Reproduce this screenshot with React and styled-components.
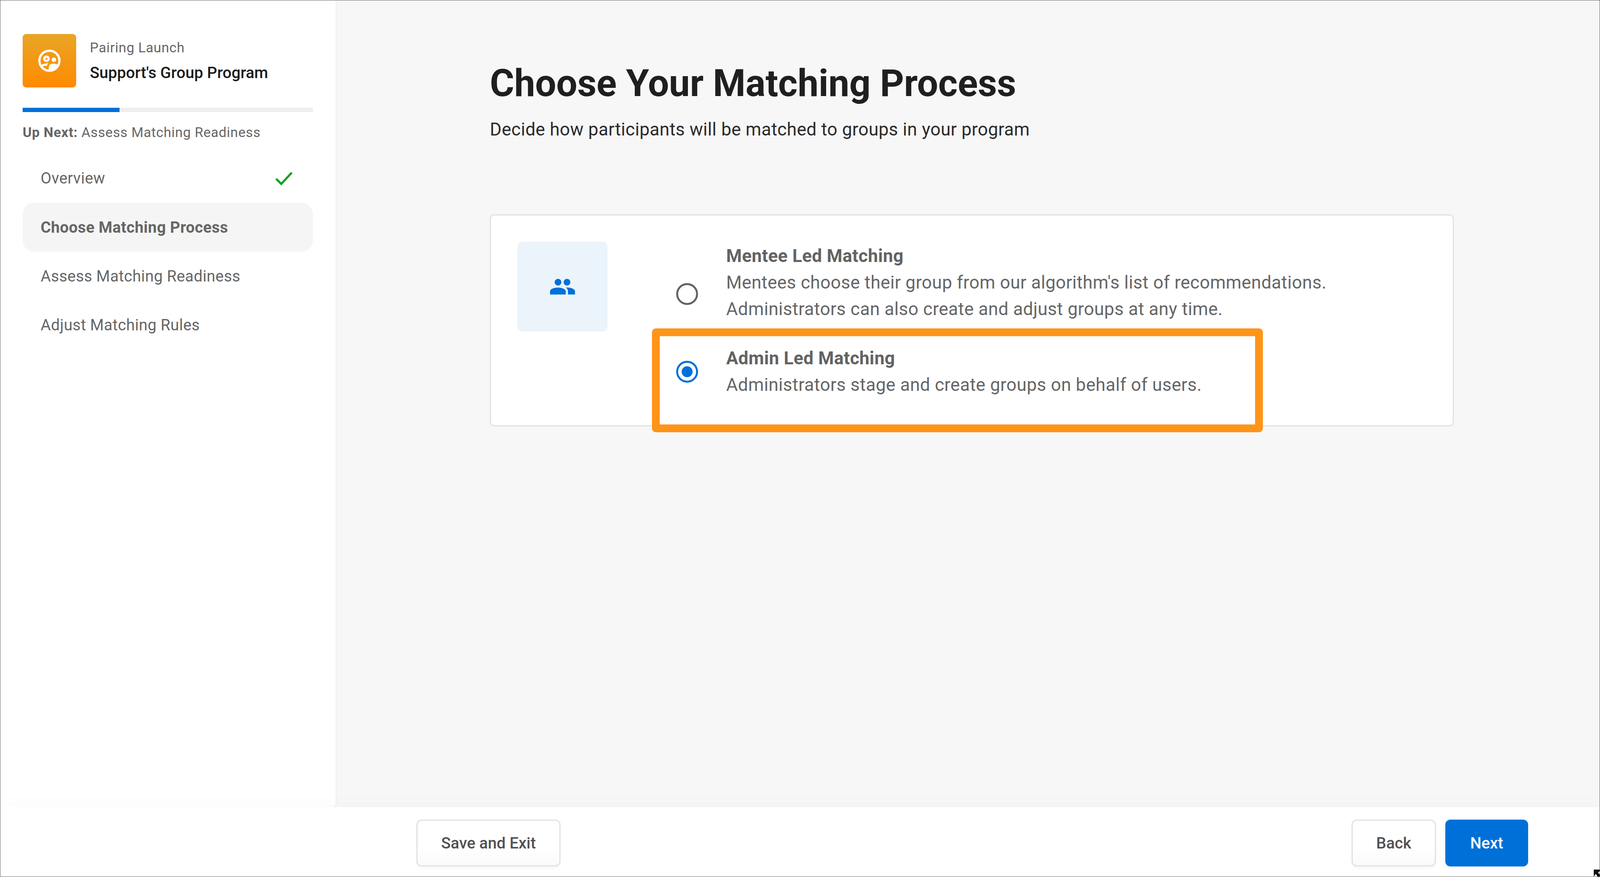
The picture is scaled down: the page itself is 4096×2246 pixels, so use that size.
import React from "react";
import styled, { createGlobalStyle } from "styled-components";

const GlobalStyle = createGlobalStyle`
  html, body {
    margin: 0;
    padding: 0;
    background: #fff;
  }
  *, *::before, *::after {
    box-sizing: border-box;
  }
`;

const Frame = styled.div`
  width: 4096px;
  height: 2246px;
  display: flex;
  flex-direction: column;
  position: relative;
  overflow: hidden;
  border: 1px solid #5c5c5c;
  font-family: Roboto, "Liberation Sans", sans-serif;
  background: #fff;
`;

const Body = styled.div`
  flex: 1;
  display: flex;
  min-height: 0;
  background: #f7f7f7;
`;

const Sidebar = styled.aside`
  width: 858px;
  flex: none;
  background: #fff;
  border-bottom-right-radius: 9px;
  box-shadow: 2px 0 6px rgba(0, 0, 0, 0.04);
  padding: 86px 58px 0 57px;
`;

const ProgramHeader = styled.div`
  display: flex;
  align-items: center;
  gap: 35px;
`;

const ProgramIcon = styled.div`
  width: 137px;
  height: 137px;
  border-radius: 9px;
  background: linear-gradient(180deg, #e9a527 0%, #ff8a00 100%);
  display: flex;
  align-items: center;
  justify-content: center;
`;

const ProgramText = styled.div`
  display: flex;
  flex-direction: column;
  gap: 18px;
`;

const ProgramLabel = styled.div`
  font-size: 35px;
  line-height: 42px;
  letter-spacing: 0.8px;
  color: #666;
`;

const ProgramName = styled.div`
  font-size: 40.5px;
  line-height: 48px;
  font-weight: 500;
  color: #1d1d1d;
`;

const ProgressTrack = styled.div`
  height: 11px;
  margin-top: 52px;
  background: #eee;
`;

const ProgressFill = styled.div`
  height: 100%;
  background: #0070d9;
`;

const UpNext = styled.div`
  margin-top: 30px;
  font-size: 35px;
  line-height: 46px;
  letter-spacing: 0.8px;
  color: #666;

  b {
    font-weight: 700;
  }
`;

const Steps = styled.nav`
  margin-top: 31px;
  display: flex;
  flex-direction: column;
`;

const Step = styled.div`
  height: 125.4px;
  display: flex;
  align-items: center;
  justify-content: space-between;
  padding: 0 51px 0 46px;
  border-radius: 30px;
  font-size: 40px;
  letter-spacing: 0.4px;
  color: #666;
  background: ${(p) => (p.$active ? "#f5f5f5" : "transparent")};
  font-weight: ${(p) => (p.$active ? 700 : 400)};
`;

const Main = styled.main`
  flex: 1;
  padding: 147px 373px 0 395px;
`;

const Title = styled.h1`
  margin: 0;
  font-size: 95.6px;
  line-height: 130px;
  font-weight: 700;
  color: #1f1f1f;
`;

const Subtitle = styled.p`
  margin: 24px 0 0;
  font-size: 45.7px;
  line-height: 60px;
  color: #2b2b2b;
  letter-spacing: 0.42px;
`;

const Card = styled.section`
  margin-top: 187px;
  height: 543px;
  position: relative;
  display: flex;
  gap: 176px;
  padding: 67px 0 0 68px;
  background: #fff;
  border: 3px solid #e2e2e2;
  border-radius: 11px;
`;

const IconTile = styled.div`
  width: 230px;
  height: 230px;
  flex: none;
  border-radius: 12px;
  background: #ebf4fb;
  display: flex;
  align-items: center;
  justify-content: center;
`;

const Options = styled.div`
  margin-top: 3px;
  display: flex;
  flex-direction: column;
`;

const Option = styled.label`
  display: flex;
  align-items: center;
  gap: 72px;
  position: relative;
  height: ${(p) => p.$height}px;

  ${(p) =>
    p.$highlighted &&
    `
    &::after {
      content: "";
      position: absolute;
      left: -62px;
      top: -43px;
      width: 1564px;
      height: 266px;
      border: 20px solid #ff9419;
      border-radius: 10px;
    }
  `}
`;

const Radio = styled.span`
  width: 56px;
  height: 56px;
  flex: none;
  border-radius: 50%;
  border: 5px solid ${(p) => (p.$checked ? "#0070d9" : "#636363")};
  display: flex;
  align-items: center;
  justify-content: center;

  &::before {
    content: "";
    width: 28px;
    height: 28px;
    border-radius: 50%;
    background: ${(p) => (p.$checked ? "#0070d9" : "transparent")};
  }
`;

const OptionText = styled.div`
  display: flex;
  flex-direction: column;
  align-self: flex-start;
`;

const OptionTitle = styled.div`
  font-size: 45.7px;
  line-height: 68px;
  font-weight: 700;
  letter-spacing: 0.42px;
  color: #636363;
`;

const OptionLine = styled.div`
  font-size: 45.7px;
  line-height: 68px;
  color: #666;
  letter-spacing: 0.42px;
`;

const Footer = styled.footer`
  height: 178px;
  flex: none;
  display: flex;
  align-items: flex-start;
  justify-content: space-between;
  padding: 32px 183px 0 1065px;
  background: #fff;
  position: relative;
  box-shadow: 0 -8px 40px rgba(0, 0, 0, 0.02);
`;

const FooterGroup = styled.div`
  display: flex;
  gap: 24px;
`;

const Button = styled.button`
  height: 120px;
  width: ${(p) => p.$width}px;
  border-radius: 13px;
  border: ${(p) => (p.$primary ? "none" : "3px solid #dfe3e6")};
  background: ${(p) =>
    p.$primary ? "#0070d9" : "linear-gradient(180deg, #fff 60%, #fafafa 100%)"};
  color: ${(p) => (p.$primary ? "#fff" : "#525252")};
  font-family: inherit;
  font-size: 40.6px;
  font-weight: 500;
  box-shadow: 0 4px 8px rgba(0, 0, 0, 0.04);
`;

const ResizeCursor = styled.svg`
  position: absolute;
  right: 0;
  bottom: 0;
`;

const Check = styled.svg`
  width: 46px;
  height: 36px;
`;

const GroupMark = () => (
  <svg width="57" height="57" viewBox="0 0 90 90" fill="none">
    <circle cx="45" cy="45" r="40.5" stroke="#fff" strokeWidth="9" />
    <circle cx="33" cy="37" r="8.5" stroke="#fff" strokeWidth="9" />
    <circle cx="63" cy="41" r="9" fill="#fff" />
    <path d="M11 62 C20 58 30 56 40 55 C37 59 35 63 35 66 C28 65 22 66 16 69Z" fill="#fff" />
    <path
      d="M42 84 C42 76 42 68 45 63 C50 56 66 54 80 62 C74 76 60 86 42 84Z"
      fill="#fff"
    />
  </svg>
);

const PeopleIcon = () => (
  <svg width="64" height="41" viewBox="0 0 100 64" fill="#0070d9">
    <circle cx="32" cy="13.5" r="13.5" />
    <circle cx="68" cy="13.5" r="13.5" />
    <path d="M0 63 V50 C0 42 13 35 32 35 C50 35 63 42 63 50 V63Z" />
    <path d="M64 35 C85 34 100 42 100 50 V63 H72 V52 C72 45 70 40 64 35Z" />
  </svg>
);

const steps = [
  { label: "Overview", done: true },
  { label: "Choose Matching Process", active: true },
  { label: "Assess Matching Readiness" },
  { label: "Adjust Matching Rules" },
];

const App = () => {
  return (
    <>
      <GlobalStyle />
      <Frame>
        <Body>
          <Sidebar>
            <ProgramHeader>
              <ProgramIcon>
                <GroupMark />
              </ProgramIcon>
              <ProgramText>
                <ProgramLabel>Pairing Launch</ProgramLabel>
                <ProgramName>Support's Group Program</ProgramName>
              </ProgramText>
            </ProgramHeader>
            <ProgressTrack>
              <ProgressFill style={{ width: `${(1 / 3) * 100}%` }} />
            </ProgressTrack>
            <UpNext>
              <b>Up Next:</b> Assess Matching Readiness
            </UpNext>
            <Steps>
              {steps.map((step) => (
                <Step key={step.label} $active={step.active}>
                  {step.label}
                  {step.done && (
                    <Check viewBox="0 0 46 36" fill="none">
                      <path
                        d="M3 19 L16 32 L43 3"
                        stroke="#0fa31e"
                        strokeWidth="5.5"
                      />
                    </Check>
                  )}
                </Step>
              ))}
            </Steps>
          </Sidebar>
          <Main>
            <Title>Choose Your Matching Process</Title>
            <Subtitle>
              Decide how participants will be matched to groups in your program
            </Subtitle>
            <Card>
              <IconTile>
                <PeopleIcon />
              </IconTile>
              <Options>
                <Option $height={262}>
                  <Radio />
                  <OptionText>
                    <OptionTitle>Mentee Led Matching</OptionTitle>
                    <OptionLine>
                      Mentees choose their group from our algorithm's list of
                      recommendations.
                    </OptionLine>
                    <OptionLine>
                      Administrators can also create and adjust groups at any
                      time.
                    </OptionLine>
                  </OptionText>
                </Option>
                <Option $height={136} $highlighted>
                  <Radio $checked />
                  <OptionText>
                    <OptionTitle>Admin Led Matching</OptionTitle>
                    <OptionLine>
                      Administrators stage and create groups on behalf of users.
                    </OptionLine>
                  </OptionText>
                </Option>
              </Options>
            </Card>
          </Main>
        </Body>
        <Footer>
          <Button $width={369}>Save and Exit</Button>
          <FooterGroup>
            <Button $width={216}>Back</Button>
            <Button $width={212} $primary>
              Next
            </Button>
          </FooterGroup>
        </Footer>
        <ResizeCursor width="19" height="23" viewBox="0 0 19 23">
          <path d="M0 0 H19 V23 H0Z" fill="#fff" />
          <path d="M4 5 H19 V9 L15 13 L19 17 V23 H14 L9 16 L4 23Z" fill="#111" />
        </ResizeCursor>
      </Frame>
    </>
  );
};

export default App;
